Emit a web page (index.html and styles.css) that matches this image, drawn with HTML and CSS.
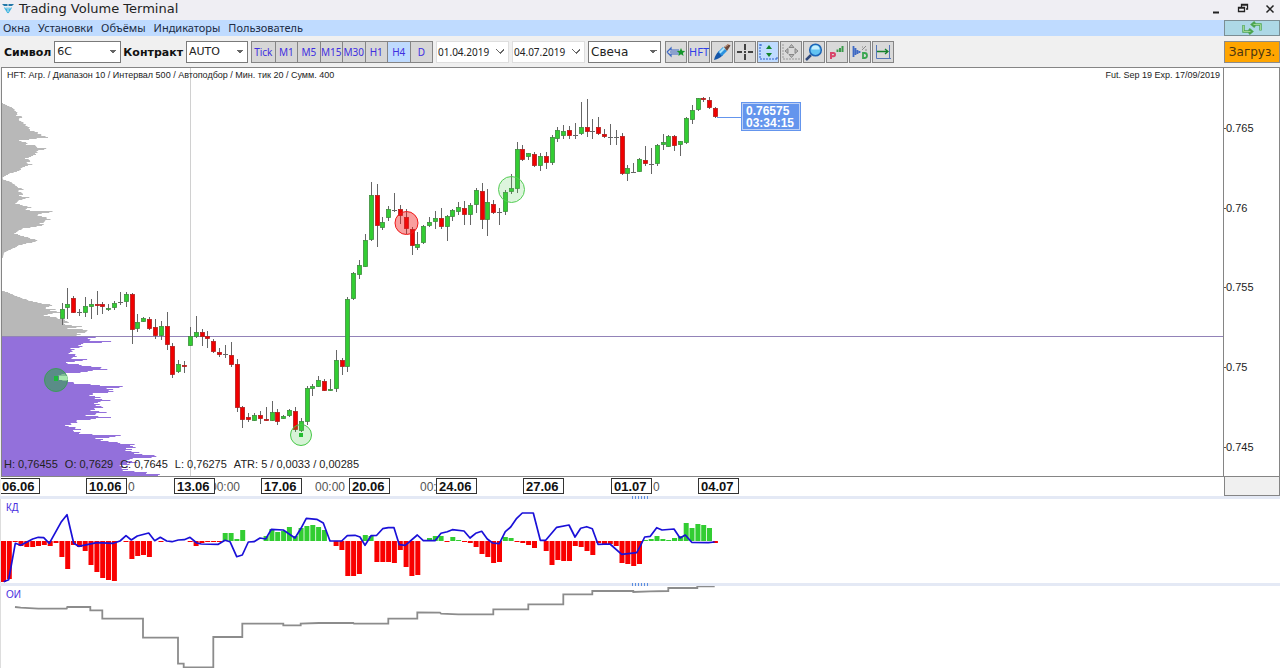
FILE: index.html
```html
<!DOCTYPE html>
<html lang="ru">
<head>
<meta charset="utf-8">
<title>Trading Volume Terminal</title>
<link rel="stylesheet" href="styles.css">
</head>
<body>
<div class="app">
  <header class="titlebar">
    <svg class="logo" width="12" height="12" viewBox="0 0 12 12"><path d="M0 1h5.500v2H2zM6.500 1H12l-2 2H6.500z" fill="#2478a8"/><path d="M2.500 4.500l2.500 4V4.500M9.500 4.500l-2.500 4V4.500M5.500 9.500h1" fill="none" stroke="#3bb4e0" stroke-width="1.200"/></svg>
    <h1 class="title">Trading Volume Terminal</h1>
    <div class="window-buttons">
      <button aria-label="Свернуть"><svg width="12" height="12"><path d="M3 9.500h6" stroke="#222" stroke-width="2"/></svg></button>
      <button aria-label="Восстановить"><svg width="12" height="12"><path d="M4.500 4V1.500h6V6H9M4.500 2h6M1.500 4.500h6v4h-6zM1.500 5h6" fill="none" stroke="#222" stroke-width="1.300"/></svg></button>
      <button aria-label="Закрыть"><svg width="12" height="12"><path d="M2.500 2.500l7 7M9.500 2.500l-7 7" stroke="#222" stroke-width="1.500"/></svg></button>
    </div>
  </header>

  <div class="menu-row">
    <nav class="menu">
      <button>Окна</button><button>Установки</button><button>Объёмы</button><button>Индикаторы</button><button>Пользователь</button>
    </nav>
    <button class="refresh" aria-label="Обновить">
      <svg width="22" height="14" viewBox="0 0 22 14"><path d="M2.500 4v6.500h8M8 8l3 2.500L8 13M19.500 9.500V3.500h-8M14 1l-3 2.500L14 6" fill="none" stroke="#4da550" stroke-width="2.400"/><path d="M2.500 4.500v6h7M19.500 9V3.500h-7" fill="none" stroke="#9ed690" stroke-width="1"/></svg>
    </button>
  </div>

  <div class="toolbar">
    <label class="caption" for="symbol">Символ</label>
    <select id="symbol" class="combo symbol"><option>6C</option></select>
    <label class="caption" for="contract">Контракт</label>
    <select id="contract" class="combo contract"><option>AUTO</option></select>
    <div class="frames">
      <button>Tick</button><button>M1</button><button>M5</button><button>M15</button><button>M30</button><button>H1</button><button class="on">H4</button><button>D</button>
    </div>
    <input class="date" type="text" value="01.04.2019" aria-label="Начало">
    <input class="date" type="text" value="04.07.2019" aria-label="Конец">
    <select class="combo style" aria-label="Тип графика"><option>Свеча</option></select>
    <div class="tools">
      <button aria-label="Стрелка"><svg viewBox="0 0 20 18"><path d="M1 9l4-4v2h8M1 9l4 4v-2h8M4 9h9" fill="none" stroke="#3d68c4" stroke-width="1.200"/><path d="M15 5l1.200 2.700 3 .3-2.300 1.900.7 3-2.600-1.600-2.600 1.600.7-3L10.800 8l3-.3z" fill="#16962b"/></svg></button>
      <button class="hft">HFT</button>
      <button aria-label="Кисть"><svg viewBox="0 0 20 18"><path d="M2 17c1-4 2-6 5-9l4 4c-3 3-5 4-9 5z" fill="#1556a8"/><path d="M6 9l5-5 4 4-5 5z" fill="#2b92e0"/><path d="M7 9l5-5 1.500 1.500-5 5z" fill="#a8e2fa"/><path d="M12 4l4-3 2.500 1.500L15 8z" fill="#6c4a3d"/><path d="M13 4l4-3" stroke="#d5a78d"/></svg></button>
      <button aria-label="Перекрестие"><svg viewBox="0 0 20 18"><path d="M10 1v6M10 11v6M2 9h5M13 9h5M9 9h2" stroke="#111" stroke-width="1.500"/></svg></button>
      <button class="on" aria-label="Автомасштаб"><svg viewBox="0 0 20 18"><path d="M2 1v15h17M2 2h3M19 16v-2" fill="none" stroke="#2d5fcd" stroke-dasharray="2 1"/><path d="M11 2l3 4H8zM11 14l3-4H8z" fill="#12852b"/></svg></button>
      <button aria-label="Перемещение"><svg viewBox="0 0 20 18"><path d="M2 1v15h17" fill="none" stroke="#999" stroke-dasharray="2 1"/><path d="M10.500 1.500l2.500 3H8zM10.500 14.500l2.500-3H8zM4 8l3-2.500v5zM17 8l-3-2.500v5z" fill="#bbb" stroke="#777" stroke-width=".8"/></svg></button>
      <button aria-label="Лупа"><svg viewBox="0 0 20 18"><path d="M7 12l-5 5" stroke="#31497b" stroke-width="2.500"/><circle cx="11.500" cy="7" r="5.800" fill="#62c3f2" stroke="#1d65b7" stroke-width="1.500"/><path d="M7.500 6.500a4 4 0 0 1 8 0z" fill="#c5effd"/></svg></button>
      <button aria-label="Профиль P"><svg viewBox="0 0 20 18"><path d="M4 16v-6h2.500q1.500 0 1.500 1.600t-1.500 1.600H4" fill="none" stroke="#d9466a" stroke-width="2"/><path d="M10.500 9V6.500M13 9V5M15.500 9V3" stroke="#3c9a4c" stroke-width="2"/></svg></button>
      <button aria-label="Профиль D"><svg viewBox="0 0 20 18"><path d="M3.500 3v11M5.500 5v7M7.500 7v4M9.500 8v2" stroke="#3f6ac4" stroke-width="1.800"/><path d="M12 7l4-4M12 4h1M15 7h2" stroke="#888"/><path d="M13 15v-5h1.500q2.500 0 2.500 2.500T14.500 15z" fill="none" stroke="#3aa651" stroke-width="1.800"/></svg></button>
      <button aria-label="Сдвиг"><svg viewBox="0 0 20 18"><path d="M3.500 2v13.500H18M16.500 2v13" fill="none" stroke="#5476b8"/><path d="M4 8.500h11M12 6l3 2.500-3 2.500" fill="none" stroke="#15812d" stroke-width="1.300"/></svg></button>
    </div>
    <button class="loading">Загруз.</button>
  </div>

  <main class="chart">
    <section class="plot">
      <svg class="canvas" id="price"></svg>
      <div class="plot-head"><span>HFT: Агр. / Диапазон 10 / Интервал 500 / Автоподбор / Мин. тик 20 / Сумм. 400</span><span>Fut. Sep 19 Exp. 17/09/2019</span></div>
      <div class="quote"><span>0.76575</span><span>03:34:15</span></div>
      <div class="plot-foot"><span>H: 0,76455</span><span>O: 0,7629</span><span>C: 0,7645</span><span>L: 0,76275</span><span>ATR: 5 / 0,0033 / 0,00285</span></div>
    </section>
    <aside class="scale"><svg class="canvas" id="scale"></svg></aside>
    <div class="dates"><svg class="canvas" id="dates"></svg></div>
    <div class="corner"></div>
  </main>
  <div class="splitter"><i></i></div>
  <section class="pane"><svg class="canvas" id="delta"></svg><h2>КД</h2></section>
  <div class="splitter"><i></i></div>
  <section class="pane last"><svg class="canvas" id="interest"></svg><h2>ОИ</h2></section>
</div>
<script src="charts.js"></script>
</body>
</html>
```
FILE: styles.css
```css
* { box-sizing: border-box; }
body { margin: 0; font-family: "DejaVu Sans", sans-serif; font-size: 11px; color: #222; background: #f0f0f0; }
button, select, input { font: inherit; color: inherit; margin: 0; border-radius: 0; }
button { padding: 0; border: 0; background: none; }
.app { height: 100vh; min-height: 560px; display: flex; flex-direction: column; overflow: hidden; }

.titlebar { height: 20px; flex: none; display: flex; align-items: center; gap: 5px; padding: 0 4px 3px 2px; background: #efeef3; }
.title { flex: 1; margin: 0; font-size: 13px; line-height: 17px; font-weight: 400; }
.window-buttons { display: flex; gap: 15px; }
.window-buttons button { height: 12px; }
.window-buttons svg, .logo { display: block; }

.menu-row { height: 16px; flex: none; display: flex; background: #bfdbff; }
.menu { flex: 1; display: flex; gap: 8px; padding-left: 3px; font-family: "Noto Sans", sans-serif; font-size: 11px; }
.menu button { line-height: 16px; color: #202c44; }
.refresh { width: 56px; border: 1px solid #7b8e94; background: #add8e6; display: flex; align-items: center; justify-content: center; }

.toolbar { height: 31px; flex: none; display: flex; align-items: center; padding: 0 0 0 4px; }
.caption { font-weight: 700; padding-top: 2px; margin-right: 3px; color: #111; }
.combo { height: 22px; appearance: none; border: 1px solid #7a7a7a; padding: 0 2px; background: conic-gradient(from -45deg at 50% 100%, #666 0 90deg, transparent 0) right 3px center / 8px 4px no-repeat, #fff; }
.symbol { width: 67px; margin-right: 2px; }
.contract { width: 62px; margin-right: 3px; }
.style { width: 73px; margin-right: 4px; font-size: 12px; }
.frames { display: grid; grid-template-columns: repeat(8, 1fr); width: 182px; height: 22px; margin-right: 3px; border: 1px solid #858585; }
.frames button { font-family: "Noto Sans", sans-serif; font-size: 10px; color: #3f2fe0; background: #d6d6d6; }
.frames button + button { border-left: 1px solid #858585; }
.frames .on, .tools .on { background: #bfdbff; }
.date { width: 73px; height: 22px; margin-right: 3px; padding: 0 1px; border: 1px solid #dedede; font-family: "Noto Sans", sans-serif; font-size: 10px; background: conic-gradient(from -45deg at 50% 70%, #fff 0 90deg, transparent 0) right 4px center / 8px 5px no-repeat, conic-gradient(from -45deg at 50% 100%, #666 0 90deg, transparent 0) right 4px center / 8px 5px no-repeat, #fff; }
.tools { display: grid; grid-template-columns: repeat(10, 1fr); gap: 1px; width: 228px; height: 22px; }
.tools button { border: 1px solid #858585; background: #d9d9d9; display: flex; align-items: center; justify-content: center; }
.tools svg { width: 20px; height: 18px; }
.tools .hft { font-family: "Noto Sans", sans-serif; font-size: 11px; color: #2f3fe8; }
.loading { width: 56px; height: 22px; margin-left: auto; border: 1px solid #8b8b8b; background: #ffa500; font-size: 12px; color: #4a3512; }

.chart { flex: 1; min-height: 0; display: grid; grid-template-columns: 1fr 56px; grid-template-rows: 1fr 19px; padding-left: 1px; }
.plot { position: relative; border: 1px solid #858585; background: #fff; overflow: hidden; font-family: "Liberation Sans", sans-serif; }
.scale { border: solid #858585; border-width: 1px 1px 1px 0; background: #fff; }
.dates { background: #fff; }
.corner { border: 1px solid #858585; border-top: 0; background: #f0f0f0; }
.canvas { display: block; width: 100%; height: 100%; font-family: "Liberation Sans", sans-serif; }
.plot .canvas { position: absolute; inset: 0; }
.plot-head { position: relative; display: flex; justify-content: space-between; padding: 1px 3px 0 5px; font-size: 9px; line-height: 12px; }
.plot-foot { position: absolute; left: 2px; bottom: 5px; display: flex; gap: 7px; font-size: 11px; line-height: 14px; }
.quote { position: absolute; left: 739px; top: 34px; width: 60px; height: 29px; border: 1px solid #6495ed; outline: 1px solid #bdd0f5; outline-offset: -2px; padding: 2px 4px; background: #6495ed; color: #fff; font-size: 12px; line-height: 12px; font-weight: 700; display: flex; flex-direction: column; }
.splitter { height: 3px; flex: none; background: #e4e9f5; display: flex; justify-content: center; }
.splitter i { width: 16px; background: repeating-linear-gradient(100deg, #5b8ee0 0 1px, transparent 1px 3px); }
.pane { height: 84px; flex: none; position: relative; background: #fff; overflow: hidden; border-left: 1px solid #ddd; }
.pane.last { height: 82px; }
.pane h2 { position: absolute; left: 5px; top: 2px; margin: 0; font-family: "Liberation Sans", sans-serif; font-size: 10px; line-height: 13px; font-weight: 400; color: #4a2fe0; }
```
FILE: charts.js
```js
const STEP = 5.835;
const make = (tag, attrs) => {
  const a = Object.entries(attrs).map(([k, v]) => `${k}="${v}"`).join(" ");
  return `<${tag} ${a}/>`;
};
const label = (x, y, text, extra = "") => `<text x="${x}" y="${y}" ${extra}>${text}</text>`;

// colour, high, low, body top, body bottom
const candles = `G303,325,309,319 G288,319,304,308 R296,313,298,313 D309,316,312,312 G297,317,306,313 G299,319,304,307 R291,315,304,306 R302,314,304,307 G304,311,308,310 G301,310,303,308 D292,305,302,302 G292,307,294,302 R293,344,294,330 G314,332,322,329 G317,322,318,322 R317,330,319,329 R319,339,327,336 G321,340,326,336 R312,350,326,345 R343,378,346,375 G360,373,364,372 R361,373,365,367 G327,346,336,346 G316,338,332,337 R329,346,332,337 R331,348,336,339 R339,353,341,352 R348,357,352,355 D345,358,354,354 R342,367,355,365 R359,412,364,408 R406,428,407,420 R413,422,417,420 G413,421,415,421 R411,424,415,419 R407,421,419,421 G401,421,412,421 R409,425,412,422 G415,419,416,419 G409,417,410,416 R407,432,411,430 G418,432,421,431 G386,425,388,422 G384,396,386,389 G376,387,380,387 R379,391,381,391 G379,391,389,391 G350,392,360,389 R358,375,360,367 G297,372,299,367 G272,300,273,299 G260,279,265,275 G234,267,240,267 G182,241,195,240 R184,247,195,226 G217,230,222,228 G206,221,209,218 D193,212,210,210 R205,224,209,216 R209,234,217,229 R227,255,229,246 G232,250,244,248 G225,244,226,243 G217,227,222,226 G211,229,218,222 R208,229,218,227 G215,241,216,227 G209,221,210,217 G202,215,207,212 R201,225,208,215 G203,225,205,215 G188,213,190,205 R183,229,191,220 G189,236,202,220 R200,214,204,213 D208,225,212,212 G190,215,192,212 G174,194,188,192 G142,193,149,189 R145,161,149,160 G153,160,153,157 R152,167,154,166 G153,171,156,166 R152,169,156,163 G135,165,137,163 G127,142,130,139 G125,139,131,136 R126,139,130,136 D123,139,135,135 G102,135,127,134 R99,137,127,132 D119,139,131,131 R117,135,127,134 R129,138,134,137 D124,145,137,137 D130,145,137,137 R133,175,136,174 G165,181,168,174 D163,173,172,172 G158,172,159,172 R146,166,160,164 D148,174,164,164 G144,166,145,164 G134,150,142,145 G135,147,136,147 R135,151,136,146 G141,156,141,145 G117,144,118,143 G105,124,110,120 G98,111,98,110 R97,102,98,100 R97,109,100,108 R107,118,108,117`.split(" ");

// volume profile outlines in thirds of a pixel: extent, depth
const upper = "8,40 40,55 52,70 50,77 68,80 55,88 78,105 88,115 88,120 103,124 120,133 143,142 55,152 85,160 75,164 117,167 100,172 143,175 110,184 105,196 75,205 97,213 75,218 97,224 65,232 60,242 30,250 8,262 8,268 30,275 50,288 52,293 75,297 52,303 72,312 55,318 88,323 60,330 45,340 92,352 75,358 80,361 160,364 110,374 150,388 120,400 135,406 70,415 42,430 90,445 118,452 60,465 12,488 8,505";
const middle = "10,33 25,38 60,53 110,68 165,76 125,84 165,88 155,92 185,97 130,105 205,122 190,135 258,138 200,145 275,151 235,160 240,168";
const lower = "285,169 265,177 268,181 340,184 235,192 250,199 215,205 225,213 200,218 240,228 200,234 275,240 185,248 245,255 290,262 320,268 250,276 180,282 190,300 220,310 300,316 372,319 325,325 345,334 270,342 290,352 290,358 352,361 280,366 305,380 275,390 310,397 265,407 325,412 235,422 200,438 240,448 220,454 250,463 382,466 290,475 335,487 410,495 385,505 395,515 420,524 495,527 380,538 400,546 365,560 380,571 420,577 505,588";
const pairs = s => s.split(" ").map(p => p.split(",").map(Number));

function profile(source, top, color) {
  const pts = pairs(source).map(([w, y]) => [w / 3 - 2, top + y / 3]);
  let d = "", seg = 0;
  const first = Math.round(pts[0][1]), last = Math.round(pts[pts.length - 1][1]);
  for (let y = first; y < last; y++) {
    while (seg < pts.length - 2 && pts[seg + 1][1] < y + .5) seg++;
    const [a, b] = [pts[seg], pts[seg + 1]];
    const t = Math.max(0, Math.min(1, (y + .5 - a[1]) / (b[1] - a[1])));
    const jitter = 1 + ((y * 7) % 5 - 2) * .02;
    d += `M0 ${y}h${((a[0] + (b[0] - a[0]) * t) * jitter).toFixed(1)}v1H0z`;
  }
  return make("path", { d, fill: color });
}

let out = '<g transform="translate(0 -68)">';
out += profile(upper, 90, "#b8b8b8") + profile(middle, 280, "#b8b8b8") + profile(lower, 280, "#9370db");
out += make("path", { d: "M188.500 68V476", stroke: "#d0d0d0" });
out += make("path", { d: "M0 336.500H3000", stroke: "#9283b8" });
candles.forEach((c, i) => {
  const [h, l, t, b] = c.slice(1).split(",").map(Number);
  const x = Math.round(60 + i * STEP - .5);
  out += make("path", { d: `M${x + .5} ${h}V${l}`, stroke: "#666" });
  if (c[0] === "D") out += make("path", { d: `M${x - 2} ${t + .5}h5`, stroke: "#666" });
  else out += make("rect", { x: x - 1.5, y: t + .5, width: 4, height: Math.max(1, b - t - 1), fill: c[0] === "G" ? "#32cd32" : "#f00000", stroke: c[0] === "G" ? "#3f8d3f" : "#b01c1c", "stroke-width": .8 });
});
const ring = (x, y, r, c, o) => make("circle", { cx: x, cy: y, r, fill: c, "fill-opacity": o, stroke: c });
out += ring(54, 380, 11.5, "#3c9b5c", .65) + make("path", { d: "M52 376h4v5h-4z", fill: "#1dbb3c" }) + make("path", { d: "M57 376h8l1 4h-9z", fill: "#a7e9ae" });
out += ring(299, 435, 10.5, "#46c846", .22) + make("path", { d: "M297 433h4v4h-4z", fill: "#25bd32" });
out += ring(404.5, 223, 11.5, "#f01818", .42) + ring(509.5, 189.5, 13, "#54cd54", .2);
out += make("path", { d: "M715 117.500H740", stroke: "#6495ed" }) + "</g>";
document.getElementById("price").innerHTML = out;

document.getElementById("scale").innerHTML = [["0.765", 60], ["0.76", 140], ["0.755", 219], ["0.75", 299], ["0.745", 379]]
  .map(([t, y]) => make("path", { d: `M0 ${y + .5}h2`, stroke: "#555" }) + label(2, y + 4, t, 'font-size="11" fill="#222"')).join("");

let dates = [[127, "0"], [209, "00:00"], [314, "00:00"], [419, "00:"], [652, "0"]]
  .map(([x, t]) => label(x, 14, t, 'font-size="12" fill="#555"')).join("");
["06.06", "10.06", "13.06", "17.06", "20.06", "24.06", "27.06", "01.07", "04.07"].forEach((t, i) => {
  const x = Math.round(-2 + i * 87.4);
  dates += make("rect", { x: x + .5, y: 1.5, width: 40, height: 15, fill: "#fff", stroke: "#333" }) + label(x + 3, 14, t, 'font-size="13" font-weight="700" fill="#111"');
});
document.getElementById("dates").innerHTML = dates;

const bars = [-41,-38,-1,-5,-6,-6,-5,-4,-5,-2,-16,-28,-4,-6,-10,-24,-31,-37,-39,-40,0,-1,-18,-15,-14,-16,0,-1,0,0,0,0,-1,-5,-2,-1,-1,-1,8,8,2,11,0,0,0,5,12,9,10,14,5,13,15,16,14,11,0,-5,-9,-35,-35,-33,6,5,-21,-21,-21,-22,-9,-26,-35,-34,0,3,5,5,-1,4,1,-1,-2,-6,-13,-16,-22,-21,4,3,-1,-2,-4,-7,0,-10,-24,-19,-20,-20,-5,-6,-10,-14,-2,-4,-3,-5,-22,-23,-25,-23,1,2,5,2,1,3,5,18,13,17,16,13,-2];
const curveA = "11,260 26,254 46,145 62,151 98,132 115,127 131,128 148,145 183,82 201,59 221,145 236,154 290,143 340,145 360,138 378,122 394,135 412,123 446,114 464,137 481,127 500,138 516,140 535,135 553,134 570,127 590,144 604,147 655,148 675,136 690,140 710,185 727,180 745,141 762,140 780,129 797,132 814,103 850,105 885,129 903,100 919,70 950,73 970,84 990,138 1025,138 1042,122 1065,121 1080,126";
const curveB = "15,151 33,122 50,121 68,101 85,98 102,98 118,149 136,151 172,120 190,137 225,137 243,115 262,110 277,104 312,108 330,129 347,115 365,109 382,132 398,144 418,146 436,110 452,96 470,70 487,54 520,54 541,136 557,136 590,97 627,90 645,126 662,100 680,95 697,101 714,148 750,147 785,178 830,173 840,155 854,126 871,124 890,98 906,105 942,102 960,129 976,120 995,142 1045,143 1064,141";
const stepA = "45,336 62,338 115,341 200,341 202,336 271,336 271,346 307,346 307,371 429,371 429,428 534,428 534,506 551,506 551,517 640,517 640,426 727,426 727,386 850,386 850,391 902,391 902,386 957,384 1060,384 1062,386";
const stepB = "0,386 85,386 85,371 172,371 172,352 240,353 243,356 295,358 400,358 400,343 505,343 505,328 610,328 610,298 697,298 697,288 820,288 820,291 870,289 925,288 925,279 1012,279 1012,274 1064,274";
const trace = (a, b, top) => [...pairs(a).map(([x, y]) => [x / 3 - 1, y / 3 - top]), ...pairs(b).map(([x, y]) => [x / 3 + 359, y / 3 - top])].map(p => p.map(n => n.toFixed(1)).join(",")).join(" ");

let delta = "";
bars.forEach((v, i) => {
  if (v) delta += make("rect", { x: (i * STEP).toFixed(1), y: v > 0 ? 42 - v : 42, width: 5, height: Math.abs(v), fill: v > 0 ? "#32cd32" : "#f80000" });
});
delta += make("polyline", { points: trace(curveA, curveB, 4), fill: "none", stroke: "#1a10d8", "stroke-width": 1.7, "stroke-linejoin": "round" });
document.getElementById("delta").innerHTML = delta;
document.getElementById("interest").innerHTML = make("polyline", { points: trace(stepA, stepB, 91), fill: "none", stroke: "#8c8c8c", "stroke-width": 1.8 });
```
